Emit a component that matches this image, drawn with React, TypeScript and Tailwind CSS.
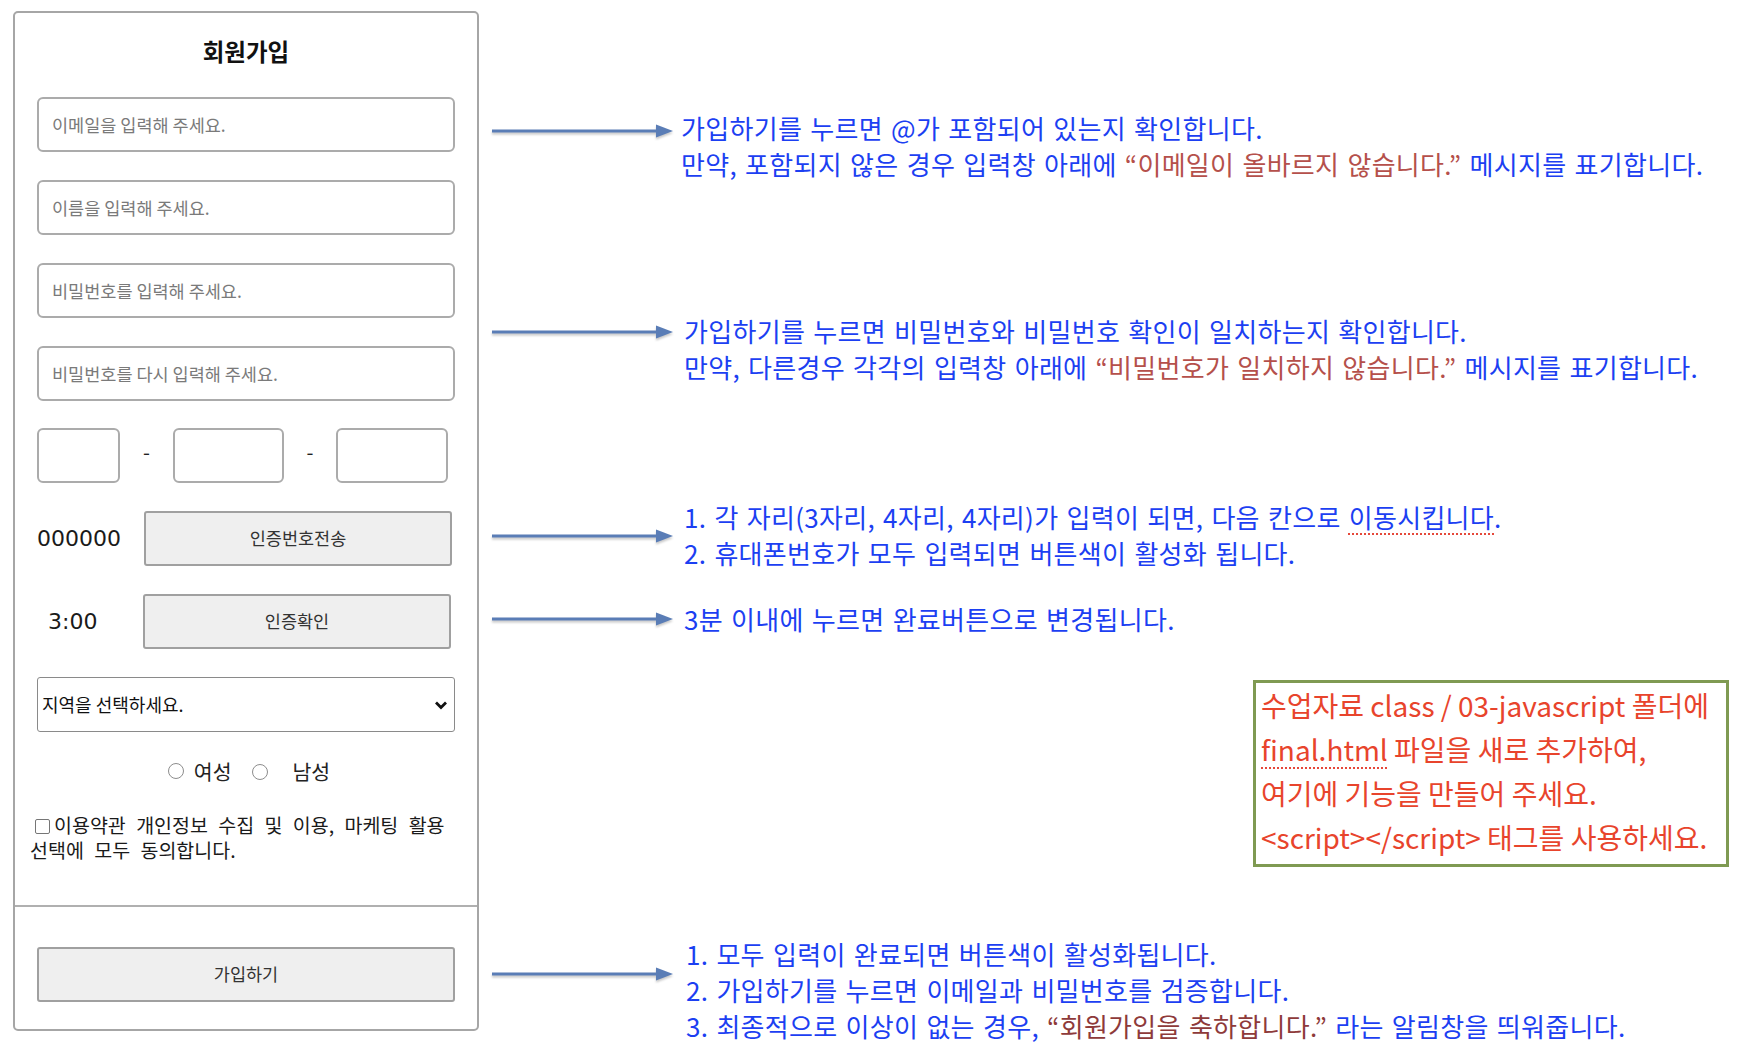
import React from 'react';

const Arrow = ({ className }: { className?: string }) => (
  <svg
    width="181"
    height="20"
    viewBox="0 0 181 20"
    className={`shrink-0 drop-shadow-[0_2px_1px_rgba(0,0,0,0.22)] ${className ?? ''}`}
  >
    <line x1="0" y1="10" x2="166" y2="10" stroke="#5a7db6" strokeWidth="3" />
    <polygon points="164,3.5 181,10 164,16.5" fill="#5a7db6" />
  </svg>
);

const TextInput = ({ placeholder }: { placeholder: string }) => (
  <input
    type="text"
    placeholder={placeholder}
    className="h-[55px] w-full border-2 border-[#ababab] rounded-[6px] px-[13px] text-[17.5px] placeholder:text-[#7a7a7a] outline-none"
  />
);

const PhoneBox = ({ className }: { className: string }) => (
  <input type="text" className={`h-[55px] border-2 border-[#ababab] rounded-[6px] outline-none ${className}`} />
);

const GrayButton = ({ children }: { children: React.ReactNode }) => (
  <button className="h-[55px] w-[308px] border-2 border-[#a0a0a0] rounded-[3px] bg-[#efefef] text-[17.5px] text-[#333]">
    {children}
  </button>
);

const Radio = () => (
  <span className="inline-block w-[16px] h-[16px] rounded-full border border-[#8d8d8d] bg-white" />
);

const SignupCard: React.FC = () => (
  <div className="w-[466px] h-[1020px] shrink-0 border-2 border-[#a6a6a6] rounded-[5px] flex flex-col">
    <div className="h-[892px] px-[22px] pt-[23px]">
      <h1 className="h-[30px] leading-[30px] text-[23.5px] font-bold text-center text-[#111]">회원가입</h1>

      <div className="mt-[31px]">
        <TextInput placeholder="이메일을 입력해 주세요." />
      </div>
      <div className="mt-[28px]">
        <TextInput placeholder="이름을 입력해 주세요." />
      </div>
      <div className="mt-[28px]">
        <TextInput placeholder="비밀번호를 입력해 주세요." />
      </div>
      <div className="mt-[28px]">
        <TextInput placeholder="비밀번호를 다시 입력해 주세요." />
      </div>

      <div className="mt-[27px] flex items-center">
        <PhoneBox className="w-[83px]" />
        <span className="w-[53px] mb-[8px] text-center text-[20px] text-[#222]">-</span>
        <PhoneBox className="w-[111px]" />
        <span className="w-[52px] mb-[8px] text-center text-[20px] text-[#222]">-</span>
        <PhoneBox className="w-[112px]" />
      </div>

      <div className="mt-[28px] flex items-center">
        <span className="w-[107px] text-[22px] text-[#1a1a1a] font-['DejaVu_Sans',sans-serif]">000000</span>
        <GrayButton>인증번호전송</GrayButton>
      </div>

      <div className="mt-[28px] flex items-center">
        <span className="ml-[11px] w-[95px] text-[22px] text-[#1a1a1a] font-['DejaVu_Sans',sans-serif]">3:00</span>
        <GrayButton>인증확인</GrayButton>
      </div>

      <div className="mt-[28px] h-[55px] border border-[#8a8a8a] rounded-[3px] flex items-center justify-between pl-[4px] pr-[6px]">
        <span className="text-[18px] text-[#111]">지역을 선택하세요.</span>
        <svg width="14" height="10" viewBox="0 0 14 10">
          <polyline points="2,2.5 7,7.5 12,2.5" fill="none" stroke="#111" strokeWidth="2.8" />
        </svg>
      </div>

      <div className="mt-[25px] h-[28px] pl-[6px] flex items-center justify-center text-[20.5px] text-[#222]">
        <Radio />
        <span className="ml-[10px]">여성</span>
        <span className="ml-[20px]">
          <Radio />
        </span>
        <span className="ml-[25px]">남성</span>
      </div>

      <p className="-ml-[7px] mt-[27px] text-[19.5px] leading-[25px] [word-spacing:6px] break-keep text-[#1a1a1a]">
        <span className="inline-block align-[-1px] w-[15px] h-[15px] border border-[#767676] rounded-[2px] ml-[5px] mr-[4px]" />
        이용약관 개인정보 수집 및 이용, 마케팅 활용 선택에 모두 동의합니다.
      </p>
    </div>

    <div className="border-t-2 border-[#b0b0b0] px-[22px] pt-[40px]">
      <button className="h-[55px] w-full border-2 border-[#a0a0a0] rounded-[3px] bg-[#efefef] text-[17.5px] text-[#333]">
        가입하기
      </button>
    </div>
  </div>
);

const App: React.FC = () => {
  return (
    <div className="min-h-screen bg-white pl-[13px] pt-[11px] flex items-start font-['Noto_Sans_CJK_KR',sans-serif]">
      <SignupCard />

      <div className="ml-[13px] flex flex-col text-[26px] leading-[36px] tracking-[0.3px] [word-spacing:2px] text-[#1c3ff2]">
        <div className="mt-[99px] flex items-start">
          <Arrow className="mt-[11px]" />
          <div className="ml-[8px] whitespace-nowrap">
            <div>가입하기를 누르면 @가 포함되어 있는지 확인합니다.</div>
            <div>
              만약, 포함되지 않은 경우 입력창 아래에{' '}
              <span className="text-[#b5504b]">“이메일이 올바르지 않습니다.”</span> 메시지를 표기합니다.
            </div>
          </div>
        </div>

        <div className="mt-[131px] flex items-start">
          <Arrow className="mt-[9px]" />
          <div className="ml-[11px] whitespace-nowrap">
            <div>가입하기를 누르면 비밀번호와 비밀번호 확인이 일치하는지 확인합니다.</div>
            <div>
              만약, 다른경우 각각의 입력창 아래에{' '}
              <span className="text-[#b5504b]">“비밀번호가 일치하지 않습니다.”</span> 메시지를 표기합니다.
            </div>
          </div>
        </div>

        <div className="mt-[114px] flex items-start">
          <Arrow className="mt-[27px]" />
          <div className="ml-[11px] whitespace-nowrap">
            <div>
              1. 각 자리(3자리, 4자리, 4자리)가 입력이 되면, 다음 칸으로{' '}
              <span className="underline decoration-dotted decoration-[#e5483a] decoration-2 underline-offset-[5px]">
                이동시킵니다
              </span>
              .
            </div>
            <div>2. 휴대폰번호가 모두 입력되면 버튼색이 활성화 됩니다.</div>
          </div>
        </div>

        <div className="mt-[30px] flex items-start">
          <Arrow className="mt-[8px]" />
          <div className="ml-[11px] whitespace-nowrap">3분 이내에 누르면 완료버튼으로 변경됩니다.</div>
        </div>

        <div className="mt-[43px] ml-[761px] w-[476px] h-[187px] border-[3px] border-[#7f9a52] pl-[5px] text-[28px] leading-[44px] tracking-normal [word-spacing:0px] text-[#e8442c] whitespace-nowrap">
          <div>수업자료 class / 03-javascript 폴더에</div>
          <div>
            <span className="underline decoration-dotted decoration-[#e5483a] decoration-2 underline-offset-[6px]">
              final.html
            </span>{' '}
            파일을 새로 추가하여,
          </div>
          <div>여기에 기능을 만들어 주세요.</div>
          <div>&lt;script&gt;&lt;/script&gt; 태그를 사용하세요.</div>
        </div>

        <div className="mt-[69px] flex items-start">
          <Arrow className="mt-[28px]" />
          <div className="ml-[13px] whitespace-nowrap">
            <div>1. 모두 입력이 완료되면 버튼색이 활성화됩니다.</div>
            <div>2. 가입하기를 누르면 이메일과 비밀번호를 검증합니다.</div>
            <div>
              3. 최종적으로 이상이 없는 경우, <span className="text-[#8e3a3a]">“회원가입을 축하합니다.”</span> 라는
              알림창을 띄워줍니다.
            </div>
          </div>
        </div>
      </div>
    </div>
  );
};

export default App;
